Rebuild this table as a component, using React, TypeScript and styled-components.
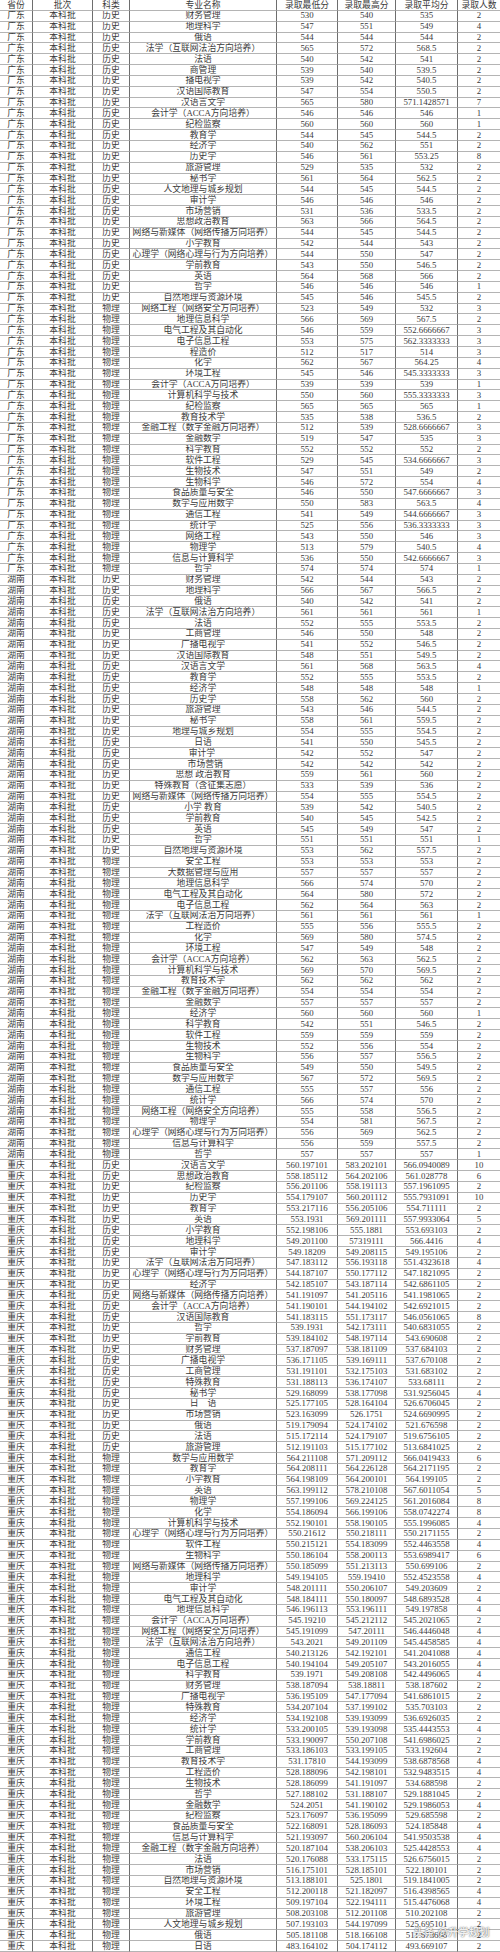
import React from 'react'
import styled, { createGlobalStyle } from 'styled-components'

const GlobalStyle = createGlobalStyle`
  html, body {
    margin: 0;
    padding: 0;
    background: #ffffff;
  }
`

type Row = [string, string, string, string, string, string, string, string]

// province, subject, then "name|min|max|avg|count" lines
const groups: [string, string, string][] = [
  ['广东', '历史', `财务管理|530|540|535|2
地理科学|547|551|549|4
俄语|544|544|544|2
法学（互联网法治方向培养）|565|572|568.5|2
法语|540|542|541|2
商管理|539|540|539.5|2
播电视学|539|542|540.5|2
汉语国际教育|547|554|550.5|2
汉语言文学|565|580|571.1428571|7
会计学（ACCA方向培养）|546|546|546|1
纪检监察|560|560|560|1
教育学|544|545|544.5|2
经济学|540|562|551|2
历史学|546|561|553.25|8
旅游管理|529|535|532|2
秘书学|561|564|562.5|2
人文地理与城乡规划|544|545|544.5|2
审计学|546|546|546|2
市场营销|531|536|533.5|2
思想政治教育|563|566|564.5|2
网络与新媒体（网络传播方向培养）|544|545|544.5|2
小学教育|542|544|543|2
心理学（网络心理与行为方向培养）|544|550|547|2
学前教育|543|550|546.5|2
英语|564|568|566|2
哲学|546|546|546|1
自然地理与资源环境|545|546|545.5|2`],
  ['广东', '物理', `网络工程（网络安全方向培养）|523|549|532|3
地理信息科学|566|569|567.5|2
电气工程及其自动化|546|559|552.6666667|3
电子信息工程|553|575|562.3333333|3
程造价|512|517|514|3
化学|562|567|564.25|4
环境工程|545|546|545.3333333|3
会计学（ACCA方向培养）|539|539|539|1
计算机科学与技术|550|560|555.3333333|3
纪检监察|565|565|565|1
教育技术学|535|538|536.5|2
金融工程（数字金融方向培养）|512|539|528.6666667|3
金融数学|519|547|535|3
科学教育|552|552|552|2
软件工程|529|545|534.6666667|3
生物技术|547|551|549|2
生物科学|546|572|554|4
食品质量与安全|546|550|547.6666667|3
数学与应用数学|550|583|563.5|4
通信工程|541|549|544.6666667|3
统计学|525|556|536.3333333|3
网络工程|543|550|546|3
物理学|513|579|540.5|4
信息与计算科学|536|550|542.6666667|3
哲学|574|574|574|1`],
  ['湖南', '历史', `财务管理|542|544|543|2
地理科学|566|567|566.5|2
俄语|540|542|541|2
法学（互联网法治方向培养）|561|561|561|1
法语|552|555|553.5|2
工商管理|546|550|548|2
广播电视学|541|552|546.5|2
汉语国际教育|548|551|549.5|2
汉语言文学|561|568|563.5|4
教育学|552|555|553.5|2
经济学|548|548|548|1
历史学|558|562|560|2
旅游管理|543|546|544.5|2
秘书学|558|561|559.5|2
地理与城乡规划|554|555|554.5|2
日语|541|550|545.5|2
审计学 |542|552|547|2
  市场营销|542|542|542|2
思想 政治教育|559|561|560|2
特殊教育（含征集志愿）|533|539|536|2
网络与新媒体（网络传播方向培养）|554|555|554.5|2
小学 教育|539|542|540.5|2
学前教育|540|545|542.5|2
英语|545|549|547|2
哲学|551|551|551|1
自然地理与资源环境|553|562|557.5|2`],
  ['湖南', '物理', `安全工程|553|553|553|2
大数据管理与应用|557|557|557|2
地理信息科学|566|574|570|2
电气工程及其自动化|564|580|572|2
电子信息工程|562|564|563|2
法学（互联网法治方向培养）|561|561|561|1
工程造价|555|556|555.5|2
化学|569|580|574.5|2
环境工程|547|549|548|2
会计学（ACCA方向培养）|562|563|562.5|2
计算机科学与技术|569|570|569.5|2
教育技术学|562|562|562|2
金融工程（数字金融方向培养）|554|554|554|2
金融数学|557|557|557|2
经济学|560|560|560|1
科学教育|542|551|546.5|2
软件工程|559|559|559|2
生物技术|552|556|554|2
生物科学|556|557|556.5|2
食品质量与安全|549|550|549.5|2
数学与应用数学|567|572|569.5|2
通信工程|555|557|556|2
统计学|566|574|570|2
网络工程（网络安全方向培养）|555|558|556.5|2
物理学|554|581|567.5|2
心理学（网络心理与行为方向培养）|556|569|562.5|2
信息与计算科学|556|559|557.5|2
哲学|557|557|557|1`],
  ['重庆', '历史', `汉语言文学|560.197101|583.202101|566.0940089|10
思想政治教育|558.185112|564.202106|561.028778|6
纪检监察|556.201106|558.191113|557.1961095|2
历史学|554.179107|560.201112|555.7931091|10
教育学|553.217116|556.205106|554.711111|2
英语|553.1931|569.201111|557.9933064|5
小学教育|552.198106|555.1881|553.693103|2
地理科学|549.201100|57319111|566.4416|4
审计学|549.18209|549.208115|549.195106|2
法学（互联网法治方向培养）|547.183112|556.193118|551.4323618|4
心理学（网络心理与行为方向培养）|544.187107|550.177112|547.1821095|2
经济学|542.185107|543.187114|542.6861105|2
网络与新媒体（网络传播方向培养）|541.191097|541.205116|541.1981065|2
会计学（ACCA方向培养）|541.190101|544.194102|542.6921015|2
汉语国际教育|541.183115|551.173117|546.0561065|8
哲学|539.1931|542.173111|540.6831055|2
学前教育|539.184102|548.197114|543.690608|2
财务管理|537.187097|538.181109|537.684103|2
广播电视学|536.171105|539.169111|537.670108|2
工商管理|531.191101|532.175103|531.683102|2
特殊教育|531.188113|536.174107|533.68111|2
秘书学|529.168099|538.177098|531.9256045|4
日　语|525.177105|528.164104|526.6706045|2
市场营销|523.163099|526.1751|524.6690995|2
俄语|519.179094|524.174102|521.676598|2
法语|515.172114|524.179107|519.6756105|2
旅游管理|512.191103|515.177102|513.6841025|2`],
  ['重庆', '物理', `数学与应用数学|564.211108|571.209112|566.0419433|6
教育学|564.208111|564.226128|564.2171195|2
小学教育|564.198109|564.200101|564.199105|2
英语|563.199112|578.210108|567.6011054|5
物理学|557.199106|569.224125|561.2016084|8
化学|554.186094|566.199106|558.0742274|8
计算机科学与技术|552.190101|558.190105|555.1996085|4
心理学（网络心理与行为方向培养）|550.21612|550.218111|550.2171155|2
软件工程|550.215121|554.183099|552.4463558|4
生物科学|550.186104|558.200113|553.6989417|6
网络与新媒体（网络传播方向培养）|550.185099|551.213113|550.699106|2
地理科学|549.194105|559.19410|552.4523558|4
审计学|548.201111|550.206107|549.203609|2
电气工程及其自动化|548.184111|550.180097|548.6893528|4
地理信息科学|546.196113|553.196111|549.197858|4
会计学（ACCA方向培养）|545.19210|545.212112|545.2021065|2
网络工程（网络安全方向培养）|545.191099|547.20111|546.4446048|4
法学（互联网法治方向培养）|543.2021|549.201109|545.4458585|4
通信工程|540.213126|542.192101|541.2041088|4
电子信息工程|540.194104|549.205107|543.2016055|4
科学教育|539.1971|549.208108|542.4496065|4
财务管理|538.187094|538.18811|538.187602|2
广播电视学|536.195109|547.177094|541.6861015|2
特殊教育|534.207104|537.199102|535.703103|2
经济学|534.192108|539.193099|536.6926035|2
统计学|533.200105|539.193098|535.4443553|4
学前教育|533.190097|550.207108|541.6986025|2
工商管理|533.186103|533.199105|533.192604|2
教育技术学|531.17810|544.193099|538.6878568|4
工程造价|528.188096|542.198101|532.9483515|4
生物技术|528.186099|541.191097|534.688598|2
哲学|527.188102|531.188107|529.1881045|2
金融数学|524.2051|541.190102|529.1986053|4
纪检监察|523.176097|536.195099|529.685598|2
食品质量与安全|522.168091|528.186093|524.185848|4
信息与计算科学|521.193097|560.206104|541.9503538|4
金融工程（数字金融方向培养）|520.187104|538.206103|525.4428553|4
法语|520.176088|533.175115|526.6756015|2
市场营销|516.175101|528.185101|522.180101|2
自然地理与资源环境|513.188101|525.1801|519.1841005|2
安全工程|512.200118|521.182097|516.4398565|4
环境工程|509.197104|522.194111|515.4476068|4
旅游管理|508.203108|512.201108|510.202108|2
人文地理与城乡规划|507.193103|544.197099|525.695101|2
俄语|505.181108|518.166108|511.673608|2
日语|483.164102|504.174112|493.669107|2`],
]

const header: Row = ['省份', '批次', '科类', '专业名称', '录取最低分', '录取最高分', '录取平均分', '录取人数']

const rows: Row[] = groups.flatMap(([prov, subj, block]) =>
  block.split('\n').map(line => {
    const [name, lo, hi, avg, n] = line.split('|')
    return [prov, '本科批', subj, name, lo, hi, avg, n] as Row
  })
)

const ROW_H = 1952 / (rows.length + 1)

export default function App() {
  return (
    <>
      <GlobalStyle />
      <Sheet>
        <Grid $rowH={ROW_H}>
          {header.map((h, i) => (
            <Cell key={'h' + i} $last={i === 7}>{h}</Cell>
          ))}
          {rows.map((r, ri) =>
            r.map((v, ci) => (
              <Cell key={ri + '-' + ci} $last={ci === 7}>{v}</Cell>
            ))
          )}
        </Grid>
        <Watermark>头条 @升学规划</Watermark>
      </Sheet>
    </>
  )
}

const Sheet = styled.div`
  position: relative;
  width: 500px;
  height: 1952px;
  overflow: hidden;
  background: #ffffff;
`

const Grid = styled.div<{ $rowH: number }>`
  display: grid;
  grid-template-columns: 33px 60px 37px 147px 61px 58px 62px 42px;
  grid-auto-rows: ${p => p.$rowH}px;
  width: 500px;
`

const Cell = styled.div<{ $last: boolean }>`
  box-sizing: border-box;
  border-right: ${p => (p.$last ? 'none' : '1px solid #6e6e6e')};
  border-bottom: 1px solid #b4b4b4;
  display: flex;
  align-items: center;
  justify-content: center;
  white-space: pre;
  overflow: hidden;
  font-family: "Liberation Serif", "Noto Sans CJK SC", serif;
  font-size: 8.8px;
  line-height: 1;
  color: #3a3a3a;
`

const Watermark = styled.div`
  position: absolute;
  right: 10px;
  bottom: 13px;
  font-family: "Noto Sans CJK SC", sans-serif;
  font-size: 10px;
  font-weight: bold;
  color: rgba(255, 255, 255, 0.92);
  text-shadow: 0 0 1px rgba(0, 0, 0, 0.5), 0 0 2px rgba(0, 0, 0, 0.35);
  letter-spacing: 0.5px;
`
